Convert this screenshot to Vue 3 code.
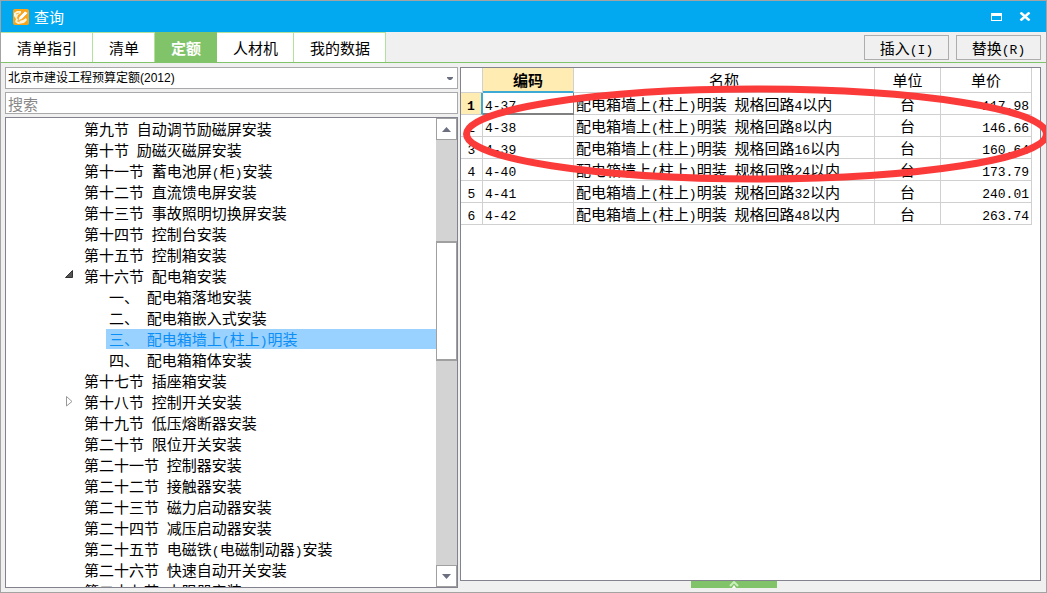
<script setup>
import { h, ref } from 'vue'

const tabs = ['清单指引', '清单', '定额', '人材机', '我的数据']
const activeTab = ref('定额')
const library = ref('2012')
const keyword = ref('')

const nodes = [
  { text: '第九节 自动调节励磁屏安装' },
  { text: '第十节 励磁灭磁屏安装' },
  { text: '第十一节 蓄电池屏(柜)安装' },
  { text: '第十二节 直流馈电屏安装' },
  { text: '第十三节 事故照明切换屏安装' },
  { text: '第十四节 控制台安装' },
  { text: '第十五节 控制箱安装' },
  { text: '第十六节 配电箱安装', state: 'open' },
  { text: '一、 配电箱落地安装', child: true },
  { text: '二、 配电箱嵌入式安装', child: true },
  { text: '三、 配电箱墙上(柱上)明装', child: true },
  { text: '四、 配电箱箱体安装', child: true },
  { text: '第十七节 插座箱安装' },
  { text: '第十八节 控制开关安装', state: 'closed' },
  { text: '第十九节 低压熔断器安装' },
  { text: '第二十节 限位开关安装' },
  { text: '第二十一节 控制器安装' },
  { text: '第二十二节 接触器安装' },
  { text: '第二十三节 磁力启动器安装' },
  { text: '第二十四节 减压启动器安装' },
  { text: '第二十五节 电磁铁(电磁制动器)安装' },
  { text: '第二十六节 快速自动开关安装' },
  { text: '第二十七节 电阻器安装' }
]
const selected = ref(10)

const rows = [
  ['4-37', '4', '117.98'],
  ['4-38', '8', '146.66'],
  ['4-39', '16', '160.64'],
  ['4-40', '24', '173.79'],
  ['4-41', '32', '240.01'],
  ['4-42', '48', '263.74']
].map(([code, loops, price]) => ({
  code,
  name: `配电箱墙上(柱上)明装 规格回路${loops}以内`,
  unit: '台',
  price
}))

// Sets half-width runs in a monospaced face beside the full-width characters.
const Mixed = ({ text }) =>
  h('span', { class: 'mixed' },
    text.split(/([\x20-\x7e]+)/).filter(Boolean).map((part) =>
      /^[\x20-\x7e]/.test(part) ? h('span', { class: 'half' }, part) : part))
Mixed.props = ['text']
</script>

<template>
  <div class="window">
    <header class="titlebar">
      <svg class="logo" viewBox="0 0 16 16" aria-hidden="true">
        <rect width="16" height="16" rx="2" fill="#f9a51a" />
        <path d="M1 4L4 2L8 2L8 4L5 6L4 9L6 12L10 11L13 9L14 11L11 14L5 15L2 13L3 10L1 7Z" fill="#fff4d8" />
        <path d="M6 8L12 2L15 4L9 10L5 12Z" fill="#fff" stroke="#f3a11c" stroke-width="0.700" />
        <path d="M3 5L6 4M4 12L7 13" stroke="#f7b94d" fill="none" />
      </svg>
      <h1>查询</h1>
      <button class="win-btn" aria-label="最大化">
        <svg width="11" height="8" viewBox="0 0 11 8"><path d="M0 0H11V8H0ZM1 3V7H10V3Z" fill="#fff" fill-rule="evenodd" /></svg>
      </button>
      <button class="win-btn" aria-label="关闭">
        <svg width="12" height="9" viewBox="0 0 12 9"><path d="M1.500 0.500L10.500 8.500M10.500 0.500L1.500 8.500" stroke="#fff" stroke-width="2.500" /></svg>
      </button>
    </header>

    <div class="toolbar">
      <nav class="tabs" role="tablist">
        <button v-for="tab in tabs" :key="tab" role="tab" class="tab" :class="{ active: tab === activeTab }"
          :aria-selected="tab === activeTab" @click="activeTab = tab">{{ tab }}</button>
      </nav>
      <div class="actions">
        <button class="action"><Mixed text="插入(I)" /></button>
        <button class="action"><Mixed text="替换(R)" /></button>
      </div>
    </div>

    <main class="body">
      <section class="left">
        <div class="combo">
          <select v-model="library" aria-label="定额库">
            <option value="2012">北京市建设工程预算定额(2012)</option>
          </select>
          <svg class="caret" width="6" height="3" viewBox="0 0 6 3"><path d="M0 0H6V1L4 3H2L0 1Z" fill="#6b7080" /></svg>
        </div>
        <input v-model="keyword" class="search" type="text" placeholder="搜索" aria-label="搜索">
        <div class="tree-box">
          <ul class="tree" role="tree">
            <li v-for="(node, i) in nodes" :key="i" role="treeitem" :aria-selected="i === selected"
              :class="{ child: node.child, selected: i === selected }" @click="selected = i">
              <span class="toggle">
                <svg v-if="node.state === 'open'" width="8" height="8" viewBox="0 0 8 8"><path d="M0.500 7.500L7.500 0.500V7.500Z" fill="#555" stroke="#333" /></svg>
                <svg v-if="node.state === 'closed'" width="8" height="11" viewBox="0 0 8 11"><path d="M1.500 0.500L7 5.500L1.500 10Z" fill="#fff" stroke="#999" /></svg>
              </span>
              <span class="label"><Mixed :text="node.text" /></span>
            </li>
          </ul>
          <div class="scrollbar">
            <button class="step" aria-label="向上滚动"><svg width="9" height="5" viewBox="0 0 9 5"><path d="M4.500 0L9 5H0Z" fill="#6b6f80" /></svg></button>
            <div class="track"><div class="thumb"></div></div>
            <button class="step" aria-label="向下滚动"><svg width="9" height="5" viewBox="0 0 9 5"><path d="M0 0H9L4.500 5Z" fill="#6b6f80" /></svg></button>
          </div>
        </div>
      </section>

      <section class="right">
        <div class="grid-panel">
          <table>
            <colgroup><col class="c-num"><col class="c-code"><col><col class="c-unit"><col class="c-price"></colgroup>
            <thead>
              <tr><th></th><th class="current">编码</th><th>名称</th><th>单位</th><th>单价</th></tr>
            </thead>
            <tbody>
              <tr v-for="(row, i) in rows" :key="row.code" :class="{ first: i === 0 }">
                <th scope="row"><span class="half">{{ i + 1 }}</span></th>
                <td class="code"><span class="half">{{ row.code }}</span></td>
                <td><Mixed :text="row.name" /></td>
                <td class="unit">{{ row.unit }}</td>
                <td class="price"><span class="half">{{ row.price }}</span></td>
              </tr>
            </tbody>
          </table>
          <svg class="mark" aria-hidden="true">
            <ellipse cx="50%" cy="50%" rx="49.400%" ry="45" fill="none" stroke="#fb3b3a" stroke-width="7" />
          </svg>
        </div>
        <button class="expander" aria-label="展开">
          <svg width="10" height="7" viewBox="0 0 10 7"><path d="M1 5L5 1L9 5" fill="none" stroke="#c9efbd" stroke-width="2" /><path d="M3 7L5 4L7 7Z" fill="#fff" /></svg>
        </button>
      </section>
    </main>
  </div>
</template>

<style>
body { overflow: hidden; }
.mixed { white-space: pre; }
.half { font-family: "Liberation Mono", monospace; font-size: 13px; line-height: 1px; }
</style>

<style scoped>
* { box-sizing: border-box; }
button, input, select { font: inherit; color: inherit; border-radius: 0; margin: 0; }
.window {
  height: 100vh;
  display: flex;
  flex-direction: column;
  overflow: hidden;
  background: #f0f0f0;
  border: 1px solid #a3a3a3;
  color: #000;
  font: 15px/20px "Noto Sans CJK SC", sans-serif;
}
.titlebar {
  flex: none;
  height: 31px;
  display: flex;
  align-items: center;
  padding: 0 11px 0 12px;
  background: #02a9f1;
  color: #fff;
}
.logo { width: 16px; height: 16px; }
h1 { margin: 0 auto 0 5px; font-size: 15px; font-weight: 400; }
.win-btn {
  display: flex;
  justify-content: center;
  width: 20px;
  margin-left: 9px;
  padding: 4px 0;
  border: 0;
  background: none;
}
.toolbar {
  flex: none;
  height: 31px;
  display: flex;
  justify-content: space-between;
  border-bottom: 1px solid #80c369;
}
.tabs { display: flex; }
.tab {
  padding: 1px 15px 0 16px;
  border: solid #b3e09c;
  border-width: 1px 1px 0 0;
  background: #fff;
}
.tab.active { background: #80c369; border-color: #80c369; color: #fff; font-weight: 700; }
.actions { display: flex; gap: 7px; padding: 3px 5px 2px 0; }
.action { width: 85px; padding: 0; border: 1px solid #adadad; background: #f0f0f0; }

.body { flex: 1; min-height: 0; display: flex; gap: 2px; padding: 4px 5px 4px 4px; }
.left { width: 453px; flex: none; display: flex; flex-direction: column; gap: 3px; }
.combo { position: relative; height: 22px; flex: none; }
.combo select {
  appearance: none;
  display: block;
  width: 100%;
  height: 22px;
  padding: 0 2px;
  border: 1px solid #a9a9ac;
  background: #fff;
  font-family: "Liberation Sans", "Noto Sans CJK SC", sans-serif;
  font-size: 12px;
}
.caret { position: absolute; right: 5px; top: 10px; }
.search {
  flex: none;
  width: 100%;
  height: 22px;
  padding: 0 2px;
  border: 1px solid #a9a9ac;
  background: #fff;
}
.search::placeholder { color: #888; opacity: 1; }
.tree-box { flex: 1; min-height: 0; display: flex; border: 1px solid #83838f; background: #fff; }
.tree { flex: 1; overflow: hidden; margin: 0; padding: 1px 0 0; list-style: none; }
.tree li { display: flex; height: 21px; padding-left: 58px; }
.tree li.child { padding-left: 83px; }
.toggle { width: 17px; flex: none; padding: 4px 0 0 1px; line-height: 0; }
.label { flex: 1; height: 20px; padding-left: 3px; }
.selected .label { background: #99d1ff; color: #0b8ef5; }
.scrollbar { width: 21px; display: flex; flex-direction: column; background: #d3d3d3; }
.step {
  height: 22px;
  display: flex;
  align-items: center;
  justify-content: center;
  padding: 0;
  border: 1px solid #a0a0a0;
  background: #fff;
}
.track { flex: 1; padding-top: 101px; }
.thumb { height: 120px; border: solid #a0a0a0; border-width: 2px 1px; background: #fff; }

.right { flex: 1; min-width: 0; display: flex; flex-direction: column; }
.grid-panel { position: relative; flex: 1; border: 1px solid #83838f; background: #fff; }
table { width: calc(100% - 8px); table-layout: fixed; border-collapse: separate; border-spacing: 0; line-height: 20px; }
.c-num { width: 22px; }
.c-code { width: 91px; }
.c-unit { width: 66px; }
.c-price { width: 91px; }
th, td {
  height: 22px;
  padding: 0 2px;
  border: solid #d0d0d0;
  border-width: 0 1px 1px 0;
  font-weight: 400;
  text-align: left;
  white-space: nowrap;
}
thead th { height: 25px; text-align: center; }
thead .current { background: #ffecb3; border-bottom: 2px solid #3daad6; font-weight: 700; }
tbody th { text-align: center; padding: 0; }
.first th { background: #ffecb3; font-weight: 700; }
.first .code { border-color: #808080; border-width: 0 1px 2px 0; line-height: 19px; }
.first th { border-right: 2px solid #3daad6; }
.unit { text-align: center; }
.price { text-align: right; }
.mark { position: absolute; left: 2px; top: 17px; width: calc(100% + 8px); height: 98px; overflow: visible; pointer-events: none; }
.expander {
  flex: none;
  align-self: center;
  display: flex;
  justify-content: center;
  width: 86px;
  height: 7px;
  margin-right: 34px;
  padding: 0;
  border: 0;
  background: #80c369;
}
</style>
